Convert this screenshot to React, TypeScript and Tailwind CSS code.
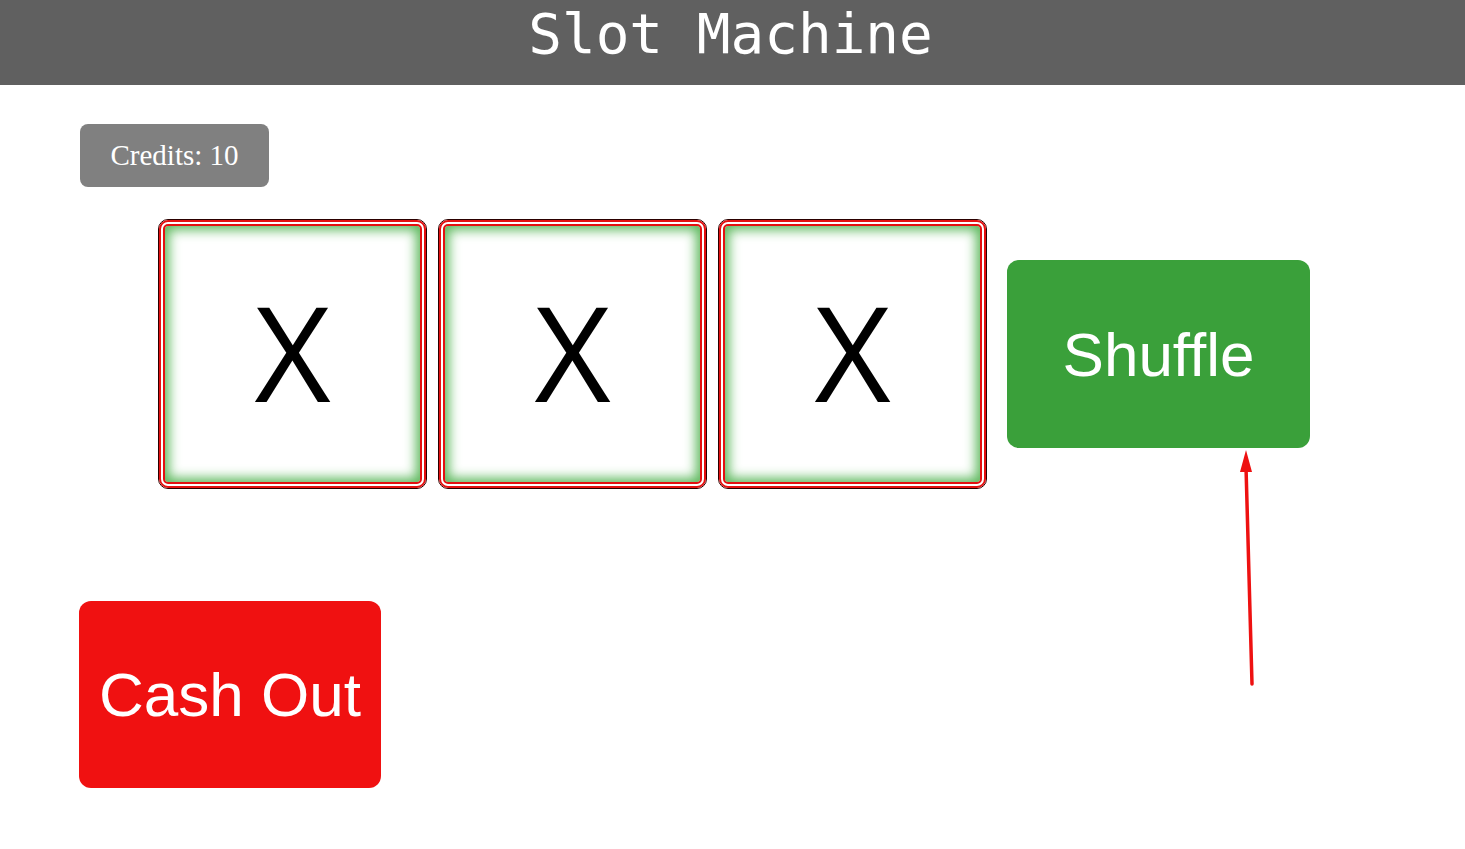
export default function App() {
  const reels = ['X', 'X', 'X'];

  return (
    <div className="relative min-h-screen bg-white">
      <header className="h-[85px] bg-[#606060] text-center">
        <h1 className="pt-[1px] pr-[4px] text-[56px] leading-[65px] text-white font-['DejaVu_Sans_Mono',monospace]">
          Slot Machine
        </h1>
      </header>

      <main className="pl-[80px] pt-[39px]">
        <div className="flex h-[63px] w-[189px] items-center justify-center rounded-[8px] bg-[#808080] text-[29px] text-white font-['Liberation_Serif',serif]">
          Credits: 10
        </div>

        <div className="mt-[32px] ml-[78px] flex items-center">
          <div className="flex gap-[11px]">
            {reels.map((symbol, i) => (
              <div key={i} className="h-[270px] w-[269px] rounded-[10px] border border-[#2a0000]">
                <div className="flex h-full w-full items-center justify-center rounded-[9px] border-[6px] border-double border-[#e41010] shadow-[inset_0_0_12px_4px_#5cb85c]">
                  <span className="-mt-[6px] text-[132px] leading-none text-black font-['Open_Sans',sans-serif]">{symbol}</span>
                </div>
              </div>
            ))}
          </div>
          <button className="ml-[20px] flex h-[188px] w-[303px] items-center justify-center rounded-[12px] bg-[#3aa03a] text-[62px] text-white font-['Liberation_Sans',sans-serif]">
            Shuffle
          </button>
        </div>

        <button className="mt-[112px] -ml-px flex h-[187px] w-[302px] items-center justify-center rounded-[12px] bg-[#f01111] text-[62px] text-white font-['Liberation_Sans',sans-serif]">
          Cash Out
        </button>
      </main>

      <svg className="absolute left-[1230px] top-[445px]" width="40" height="250" viewBox="0 0 40 250">
        <line x1="22" y1="239" x2="16" y2="22" stroke="#ee1111" strokeWidth="3.5" strokeLinecap="round" />
        <polygon points="16,5 10,27 22,27" fill="#ee1111" />
      </svg>
    </div>
  );
}
